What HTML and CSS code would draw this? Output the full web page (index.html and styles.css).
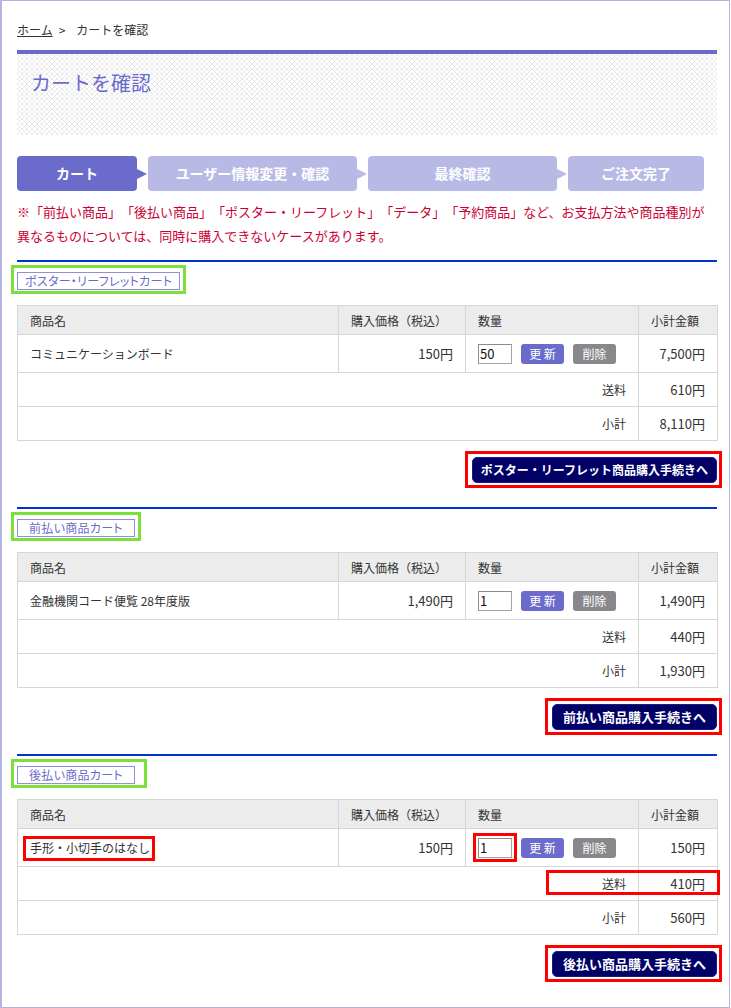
FILE: index.html
```html
<!DOCTYPE html>
<html lang="ja">
<head>
<meta charset="utf-8">
<title>カートを確認</title>
<link rel="stylesheet" href="styles.css">
</head>
<body>
<div class="frame">
  <div class="page">
    <nav class="breadcrumb"><a href="#">ホーム</a><span class="sep">&gt;</span><span>カートを確認</span></nav>

    <div class="page-title"><h1>カートを確認</h1></div>

    <ol class="steps">
      <li class="step step-active step-cart">カート</li>
      <li class="step step-user">ユーザー情報変更・確認</li>
      <li class="step step-confirm">最終確認</li>
      <li class="step step-done">ご注文完了</li>
    </ol>

    <p class="notice">※「前払い商品」「後払い商品」「ポスター・リーフレット」「データ」「予約商品」など、お支払方法や商品種別が異なるものについては、同時に購入できないケースがあります。</p>

    <section class="cart">
      <div class="cart-head"><span class="cart-label hl hl-green">ポスター・リーフレットカート</span></div>
      <table class="cart-table">
        <colgroup><col class="c-name"><col class="c-price"><col class="c-qty"><col class="c-sum"></colgroup>
        <thead>
          <tr><th>商品名</th><th>購入価格（税込）</th><th>数量</th><th>小計金額</th></tr>
        </thead>
        <tbody>
          <tr class="item">
            <td>コミュニケーションボード</td>
            <td class="num">150円</td>
            <td class="qty"><span class="qty-wrap"><input class="qty-input" type="text" value="50"></span><button class="btn-update" type="button">更 新</button><button class="btn-delete" type="button">削除</button></td>
            <td class="num">7,500円</td>
          </tr>
          <tr class="total"><td class="num label" colspan="3"><span class="total-label">送料</span></td><td class="num">610円</td></tr>
          <tr class="total"><td class="num label" colspan="3"><span class="total-label">小計</span></td><td class="num">8,110円</td></tr>
        </tbody>
      </table>
      <div class="checkout"><span class="checkout-action hl hl-red-btn"><button class="btn-checkout btn-checkout-long" type="button">ポスター・リーフレット商品購入手続きへ</button></span></div>
    </section>

    <section class="cart">
      <div class="cart-head"><span class="cart-label hl hl-green">前払い商品カート</span></div>
      <table class="cart-table">
        <colgroup><col class="c-name"><col class="c-price"><col class="c-qty"><col class="c-sum"></colgroup>
        <thead>
          <tr><th>商品名</th><th>購入価格（税込）</th><th>数量</th><th>小計金額</th></tr>
        </thead>
        <tbody>
          <tr class="item">
            <td>金融機関コード便覧 28年度版</td>
            <td class="num">1,490円</td>
            <td class="qty"><span class="qty-wrap"><input class="qty-input" type="text" value="1"></span><button class="btn-update" type="button">更 新</button><button class="btn-delete" type="button">削除</button></td>
            <td class="num">1,490円</td>
          </tr>
          <tr class="total"><td class="num label" colspan="3"><span class="total-label">送料</span></td><td class="num">440円</td></tr>
          <tr class="total"><td class="num label" colspan="3"><span class="total-label">小計</span></td><td class="num">1,930円</td></tr>
        </tbody>
      </table>
      <div class="checkout"><span class="checkout-action hl hl-red-btn"><button class="btn-checkout" type="button">前払い商品購入手続きへ</button></span></div>
    </section>

    <section class="cart">
      <div class="cart-head"><span class="cart-label hl hl-green hl-green-wide">後払い商品カート</span></div>
      <table class="cart-table">
        <colgroup><col class="c-name"><col class="c-price"><col class="c-qty"><col class="c-sum"></colgroup>
        <thead>
          <tr><th>商品名</th><th>購入価格（税込）</th><th>数量</th><th>小計金額</th></tr>
        </thead>
        <tbody>
          <tr class="item">
            <td><span class="item-name hl hl-red-name">手形・小切手のはなし</span></td>
            <td class="num">150円</td>
            <td class="qty"><span class="qty-wrap hl hl-red-qty"><input class="qty-input" type="text" value="1"></span><button class="btn-update" type="button">更 新</button><button class="btn-delete" type="button">削除</button></td>
            <td class="num">150円</td>
          </tr>
          <tr class="total"><td class="num label" colspan="3"><span class="total-label hl hl-red-ship">送料</span></td><td class="num">410円</td></tr>
          <tr class="total"><td class="num label" colspan="3"><span class="total-label">小計</span></td><td class="num">560円</td></tr>
        </tbody>
      </table>
      <div class="checkout"><span class="checkout-action hl hl-red-btn"><button class="btn-checkout" type="button">後払い商品購入手続きへ</button></span></div>
    </section>
  </div>
</div>
</body>
</html>
```

FILE: styles.css
```css
* { box-sizing: border-box; }

html, body {
  margin: 0;
  padding: 0;
  background: #fff;
}

body {
  font-family: "Noto Sans CJK JP", "Noto Sans", "Liberation Sans", sans-serif;
  font-size: 12px;
  color: #333;
  text-spacing-trim: space-all;
}

.frame {
  width: 730px;
  height: 1008px;
  border: 1px solid #b4b4e4;
  border-left-width: 2px;
  overflow: hidden;
}

.page {
  width: 700px;
  margin-left: 15px;
  padding-top: 20px;
}

/* breadcrumb */
.breadcrumb {
  display: flex;
  align-items: center;
  height: 18px;
  line-height: 18px;
  font-size: 12px;
}
.breadcrumb a {
  color: #333;
  text-decoration: underline;
}
.breadcrumb .sep {
  margin: 0 11px 0 6px;
}

/* page title */
.page-title {
  margin-top: 11px;
  height: 85px;
  border-top: 4px solid #6b6bcc;
  padding: 15px 14px 0;
  background-color: #fff;
  background-image:
    linear-gradient(45deg, transparent 42%, #e8e8e8 42%, #e8e8e8 58%, transparent 58%),
    linear-gradient(-45deg, transparent 42%, #e8e8e8 42%, #e8e8e8 58%, transparent 58%);
  background-size: 5px 5px;
}
.page-title h1 {
  margin: 0;
  font-size: 20px;
  line-height: 28px;
  font-weight: normal;
  color: #6b6bcc;
}

/* steps */
.steps {
  list-style: none;
  margin: 21px 0 0;
  padding: 0;
  display: flex;
  gap: 11px;
}
.step {
  position: relative;
  height: 35px;
  line-height: 35px;
  border-radius: 4px;
  background: #b9b9e6;
  color: #fff;
  font-size: 14px;
  font-weight: bold;
  text-align: center;
}
.step::after {
  content: "";
  position: absolute;
  left: 100%;
  top: 50%;
  margin-top: -5px;
  border-left: 10px solid #b9b9e6;
  border-top: 5px solid transparent;
  border-bottom: 5px solid transparent;
}
.step:last-child::after { display: none; }
.step-active { background: #6b6bcc; }
.step-active::after { border-left-color: #6b6bcc; }
.step-cart { width: 120px; }
.step-user { width: 209px; }
.step-confirm { width: 189px; }
.step-done { width: 136px; }

/* notice */
.notice {
  margin: 9px 0 12px;
  font-size: 13px;
  line-height: 24px;
  color: #cc0033;
}

/* cart sections */
.cart {
  border-top: 2px solid #0033cc;
  padding-top: 10px;
}
.cart + .cart { margin-top: 24px; }

.cart-head {
  height: 18px;
  display: flex;
}
.cart-label {
  display: inline-block;
  min-width: 118px;
  height: 18px;
  line-height: 16px;
  padding: 0 7px;
  border: 1px solid #8f8fe0;
  font-size: 12px;
  color: #6b6bcc;
  text-align: center;
  font-feature-settings: "palt";
  letter-spacing: 0.3px;
}

.cart-table {
  width: 700px;
  margin-top: 15px;
  border-collapse: collapse;
  table-layout: fixed;
}
.c-name { width: 321px; }
.c-price { width: 127px; }
.c-qty { width: 173px; }
.c-sum { width: 79px; }

.cart-table th,
.cart-table td {
  border: 1px solid #d6d6d6;
  padding: 0 12px;
  font-size: 12px;
  vertical-align: middle;
  white-space: nowrap;
}
.cart-table th {
  height: 29px;
  background: #ececec;
  font-weight: normal;
  text-align: left;
  color: #333;
}
.cart-table .item td { height: 38px; }
.cart-table .total td { height: 34px; }
.cart-table td.num {
  text-align: right;
  font-size: 13px;
}
.cart-table td.label { font-size: 12px; }

.qty-wrap {
  display: inline-block;
  vertical-align: middle;
  margin-right: 9px;
}
.qty-input {
  display: block;
  width: 34px;
  height: 20px;
  padding: 0 1px;
  border: 1px solid #a3a3a3;
  border-top-color: #8c8c8c;
  border-left-color: #8c8c8c;
  font-family: "Noto Sans CJK JP", "Noto Sans", sans-serif;
  font-size: 13px;
  color: #111;
  background: #fff;
}
.btn-update,
.btn-delete {
  display: inline-block;
  vertical-align: middle;
  width: 43px;
  height: 20px;
  padding: 0;
  border: 0;
  border-radius: 3px;
  color: #fff;
  font-family: "Noto Sans CJK JP", "Noto Sans", sans-serif;
  font-size: 12px;
  line-height: 20px;
}
.btn-update {
  background: #6b6bcc;
  margin-right: 9px;
}
.btn-delete { background: #88888c; }

.item-name {
  display: inline-block;
  line-height: 18px;
}
.total-label {
  display: inline-block;
  line-height: 18px;
}

/* checkout */
.checkout {
  display: flex;
  justify-content: flex-end;
  margin-top: 16px;
}
.checkout-action {
  display: inline-block;
}
.btn-checkout {
  display: block;
  height: 26px;
  padding: 0 10px;
  border: 1px solid #1a1a80;
  border-radius: 5px;
  background: #000066;
  color: #fff;
  font-family: "Noto Sans CJK JP", "Noto Sans", sans-serif;
  font-size: 13px;
  font-weight: bold;
  line-height: 24px;
}
.btn-checkout-long {
  font-size: 12px;
  padding: 0 8px;
}

/* annotation overlays */
.hl { position: relative; }
.hl::after {
  content: "";
  position: absolute;
  pointer-events: none;
  border: 3px solid #ff0000;
}
.hl-green::after {
  border-color: #7de03a;
  inset: -8px -7px -5px -7px;
}
.hl-green-wide::after { right: -13px; }
.hl-red-btn::after { inset: -6px -5px -5px -7px; }
.hl-red-name::after { inset: -3px -5px -4px -7px; }
.hl-red-qty::after { inset: -5px -5px -4px -5px; }
.hl-red-ship::after { inset: -5px -94px -2px -56px; }
```
